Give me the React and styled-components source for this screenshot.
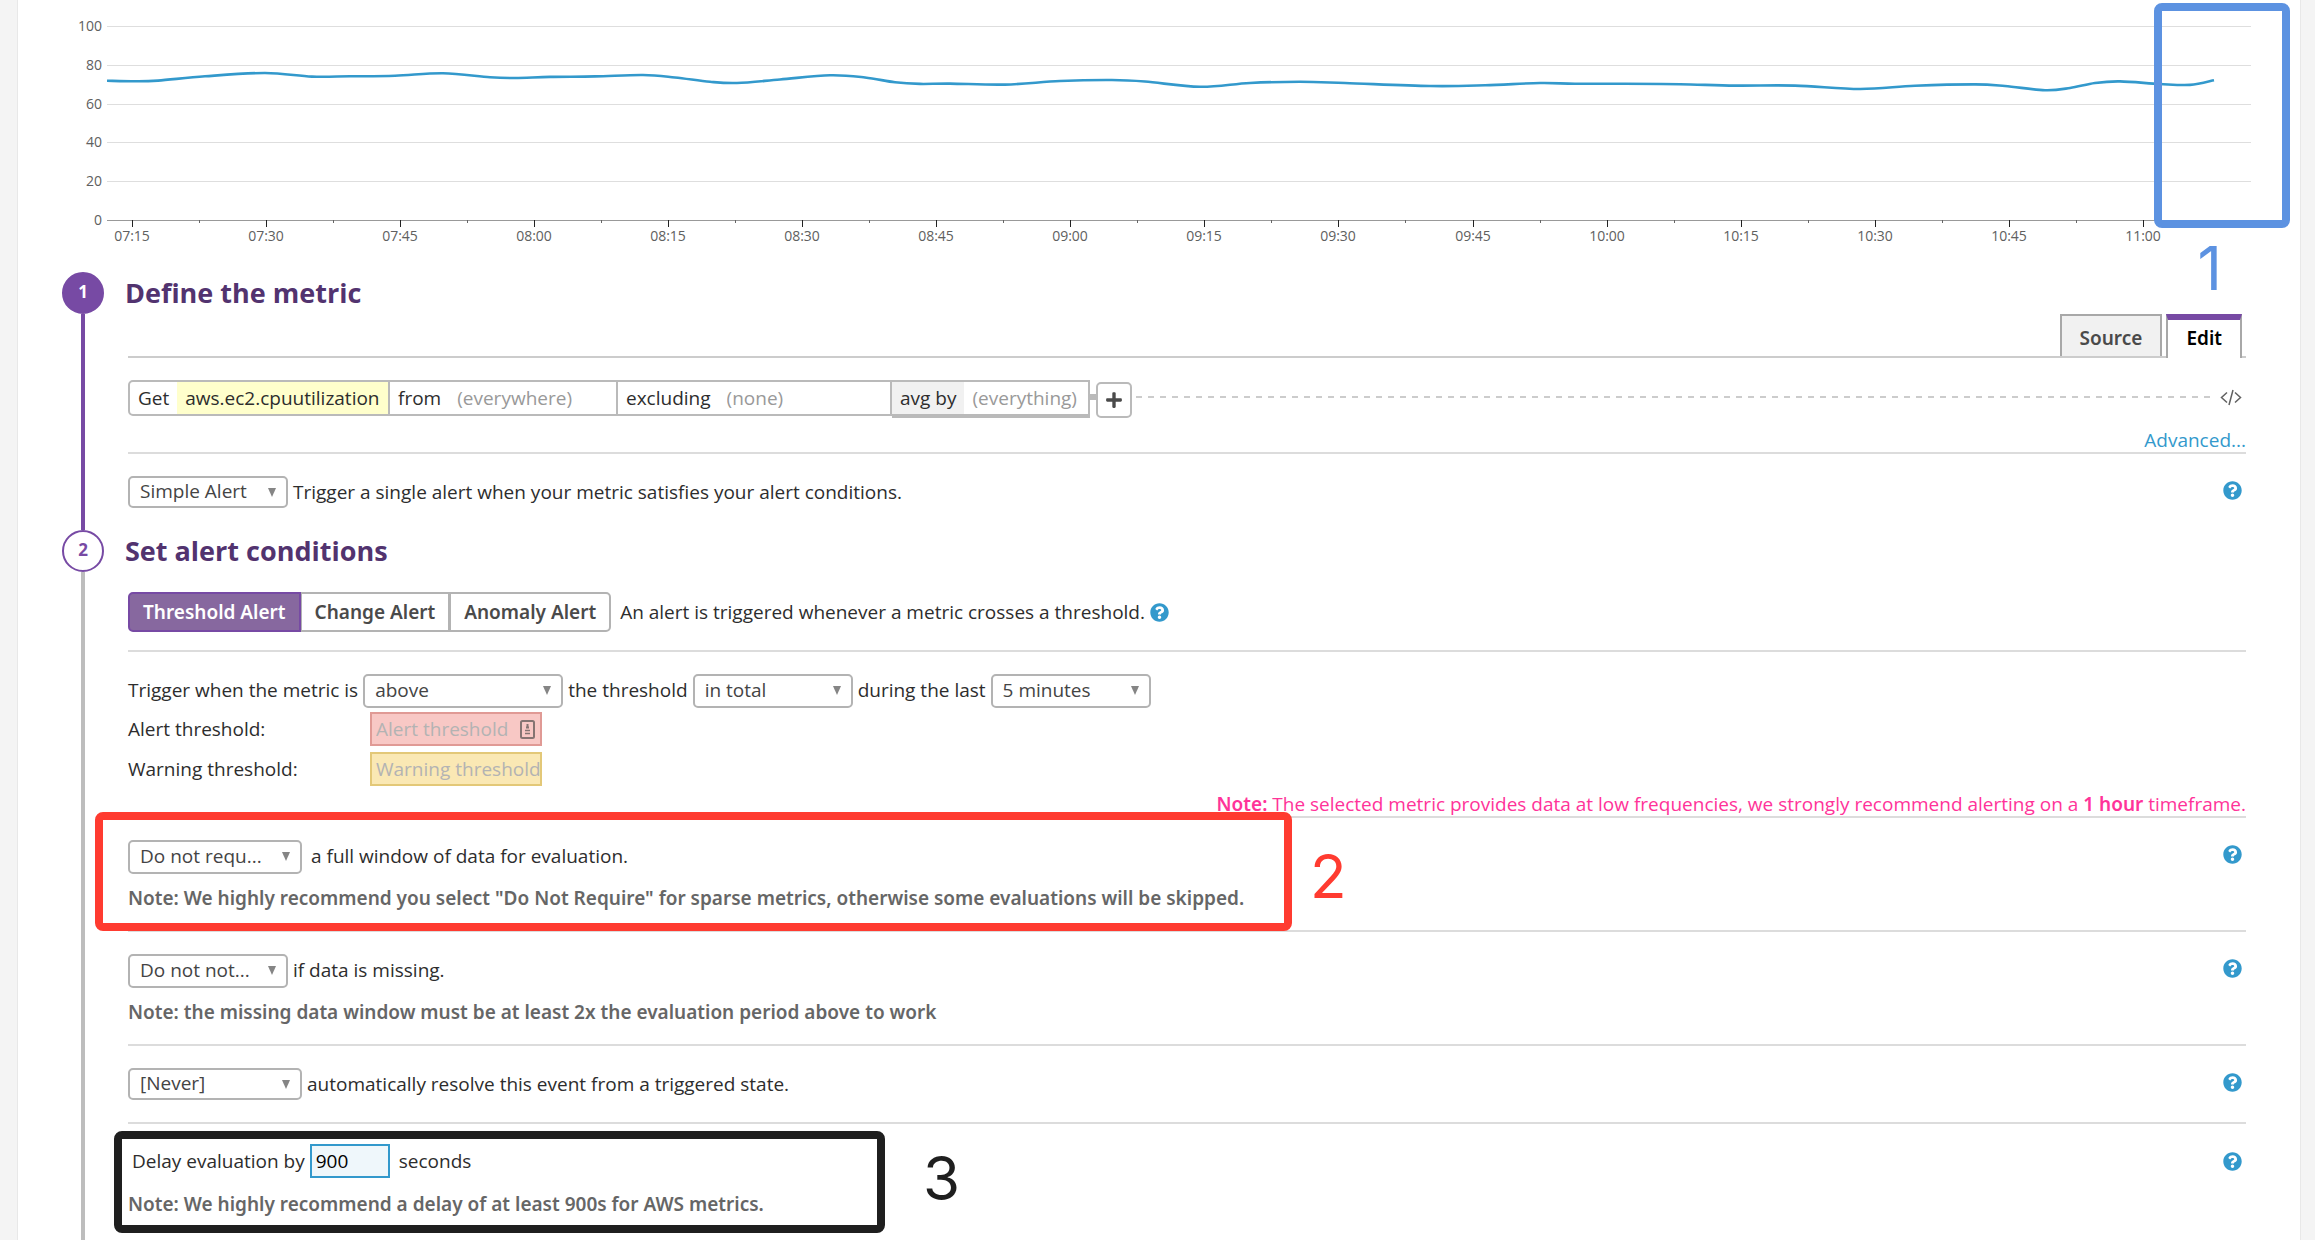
import React, { useState } from "react";
import styled, { createGlobalStyle, css } from "styled-components";
import { FaPlus, FaQuestionCircle } from "react-icons/fa";

const color = {
  purple: "#774aa4",
  heading: "#52336f",
  text: "#2d2d2d",
  muted: "#666666",
  faint: "#999999",
  border: "#b3b3b3",
  rule: "#dcdcdc",
  blue: "#3399cc",
  pink: "#ff3399",
};

const sans = '"Open Sans", "Noto Sans", sans-serif';
const strong = css`
  font-family: "Noto Sans", "Open Sans", sans-serif;
  font-weight: 600;
`;

const GlobalStyle = createGlobalStyle`
  *, *::before, *::after { box-sizing: border-box; }
  body {
    margin: 0;
    background: #fff;
    color: ${color.text};
    font-family: ${sans};
    font-size: 19px;
    line-height: 24px;
  }
  button, input, select { font: inherit; color: inherit; margin: 0; }
`;

const Backdrop = styled.div`
  margin-bottom: 16px;
  padding: 0 15px 0 18px;
  background: #f4f4f4;
`;

const Panel = styled.main`
  background: #fff;
  box-shadow: 0 0 0 1px #e8e8e8;
  clip-path: inset(0 -1px);
`;

const ChartArea = styled.section`
  position: relative;
  padding-bottom: 12px;
`;

const ChartSvg = styled.svg`
  display: block;
  width: 100%;
  height: auto;
  font-size: 14px;
  fill: #606060;
`;

const Callout = styled.div`
  position: absolute;
  border: 8px solid ${(p) => p.$color};
  border-radius: 8px;
  pointer-events: none;
  ${(p) => p.$place}
`;

const CalloutNumber = styled.span`
  position: absolute;
  color: ${(p) => p.$color};
  font-family: Inter, "Liberation Sans", sans-serif;
  font-size: 60px;
  line-height: 64px;
  ${(p) => p.$place}
`;

const Step = styled.section`
  display: grid;
  grid-template-columns: 42px minmax(0, 1fr);
  column-gap: 24px;
  padding: 0 54px 0 44px;
`;

const Rail = styled.div`
  display: flex;
  flex-direction: column;
  align-items: center;
  &::after {
    content: "";
    flex: 1;
    width: 4px;
    background: ${(p) => (p.$done ? color.purple : "#bdbdbd")};
  }
`;

const StepNumber = styled.span`
  width: 42px;
  height: 42px;
  border: 2px solid ${color.purple};
  border-radius: 50%;
  background: ${(p) => (p.$done ? color.purple : "#fff")};
  color: ${(p) => (p.$done ? "#fff" : color.purple)};
  font-size: 17px;
  font-weight: 700;
  line-height: 36px;
  text-align: center;
`;

const StepTitle = styled.h2`
  margin: 0 0 0 -3px;
  color: ${color.heading};
  font-size: 27px;
  font-weight: 700;
  line-height: 42px;
`;

const Tabs = styled.div`
  display: flex;
  justify-content: flex-end;
  gap: 4px;
  height: 44px;
  padding-right: 4px;
  border-bottom: 2px solid #cccccc;
`;

const Tab = styled.button`
  height: ${(p) => (p.$active ? 44 : 42)}px;
  padding: ${(p) => (p.$active ? "0 18px 2px" : "3px 18px 0")};
  border: 2px solid #a8a8a8;
  border-bottom: 0;
  border-top: ${(p) => (p.$active ? `6px solid ${color.purple}` : "2px solid #a8a8a8")};
  border-radius: 0;
  background: ${(p) => (p.$active ? "#fff" : "#f1f1f1")};
  color: ${(p) => (p.$active ? "#000" : "#4a4a4a")};
  ${strong}
`;

const Block = styled.div`
  position: relative;
  padding: ${(p) => p.$top ?? 22}px 0 ${(p) => p.$bottom ?? 0}px;
  border-bottom: ${(p) => (p.$last ? "0" : `2px solid ${color.rule}`)};
`;

const Query = styled.div`
  display: flex;
  align-items: flex-start;
  height: 38px;
`;

const Segment = styled.label`
  display: flex;
  align-items: stretch;
  width: ${(p) => p.$width}px;
  height: 36px;
  border: 2px solid #bababa;
  border-left-width: ${(p) => (p.$first ? 2 : 0)}px;
  border-radius: ${(p) => (p.$first ? "5px 0 0 5px" : "0")};
  box-shadow: ${(p) => (p.$raised ? "0 2px 0 #bababa" : "none")};
  line-height: 32px;
`;

const SegmentName = styled.span`
  padding: 0 8px;
  background: ${(p) => (p.$shaded ? "#f1f1f1" : "transparent")};
  white-space: nowrap;
`;

const SegmentInput = styled.input`
  flex: 1;
  min-width: 0;
  padding: 0 8px;
  border: 0;
  background: ${(p) => (p.$metric ? "#ffffcc" : "transparent")};
  &::placeholder { color: ${color.faint}; opacity: 1; }
`;

const Connector = styled.span`
  width: 6px;
  height: 6px;
  margin-top: 14px;
  background: #bababa;
`;

const AddButton = styled.button`
  display: grid;
  place-items: center;
  width: 36px;
  height: 36px;
  margin-top: 2px;
  padding: 0;
  border: 2px solid #bababa;
  border-radius: 5px;
  background: #fff;
  color: #4a4a4a;
`;

const Dashes = styled.span`
  flex: 1;
  height: 2px;
  margin: 16px 10px 0 4px;
  background: repeating-linear-gradient(90deg, #cccccc 0 6px, transparent 6px 12px);
`;

const CodeButton = styled.button`
  display: flex;
  margin: 9px 4px 0 0;
  padding: 0;
  border: 0;
  background: none;
`;

const AdvancedLine = styled.div`
  margin-top: 10px;
  text-align: right;
  a { color: ${color.blue}; text-decoration: none; }
`;

const Row = styled.div`
  display: flex;
  align-items: ${(p) => (p.$center ? "center" : "flex-start")};
  gap: 5px;
  margin-top: ${(p) => p.$gap ?? 0}px;
  padding-left: ${(p) => p.$indent ?? 0}px;
`;

const Words = styled.span`
  line-height: 32px;
  white-space: nowrap;
  padding-left: ${(p) => p.$pad ?? 0}px;
`;

const FieldLabel = styled.label`
  width: ${(p) => (p.$wide ? "237px" : "auto")};
  line-height: 32px;
  white-space: nowrap;
`;

const SelectBox = styled.span`
  position: relative;
  display: block;
  flex: none;
  width: ${(p) => p.$width}px;
  height: ${(p) => (p.$short ? 32 : 34)}px;
  &::after {
    content: "";
    position: absolute;
    right: 12px;
    top: 12px;
    border: 4px solid transparent;
    border-top: 9px solid #858585;
    border-bottom: 0;
    pointer-events: none;
  }
`;

const NativeSelect = styled.select`
  appearance: none;
  width: 100%;
  height: 100%;
  padding: 0 24px 2px 10px;
  border: 2px solid ${color.border};
  border-radius: 5px;
  background: #fff;
  color: #444;
`;

const HelpButton = styled.button`
  display: flex;
  flex: none;
  align-self: ${(p) => (p.$center ? "center" : "flex-start")};
  margin: ${(p) => (p.$center ? "0" : "5px")} 4px 0 ${(p) => (p.$inline ? "0" : "auto")};
  padding: 0;
  border: 0;
  background: none;
  color: ${color.blue};
`;

const AlertTypes = styled.div`
  display: flex;
  margin-right: 4px;
`;

const AlertType = styled.button`
  height: 40px;
  padding: 0 13px;
  border: 2px solid ${(p) => (p.$active ? color.purple : color.border)};
  background: ${(p) => (p.$active ? "#87689f" : "#fff")};
  color: ${(p) => (p.$active ? "#fff" : "#4a4a4a")};
  ${strong}
  &:first-child { border-radius: 5px 0 0 5px; }
  &:last-child { border-radius: 0 5px 5px 0; }
  & + & { border-left-width: 1px; }
`;

const tones = {
  alert: css`border-color: #e09a95; background: #f8c8c5;`,
  warning: css`border-color: #e3c878; background: #fae8b4;`,
  focus: css`border-color: ${color.blue}; background: #eff7fb; color: #000;`,
};

const TextField = styled.input`
  width: ${(p) => p.$width}px;
  height: 34px;
  padding: 0 0 0 4px;
  border: 2px solid;
  border-radius: 0;
  ${(p) => tones[p.$tone]}
  &::placeholder { color: #b3b3b3; opacity: 1; }
`;

const FieldWrap = styled.span`
  position: relative;
  display: flex;
  svg { position: absolute; right: 7px; top: 8px; }
`;

const Note = styled.p`
  margin: ${(p) => p.$gap ?? 12}px 0 0;
  color: ${color.muted};
  ${strong}
`;

const Frequency = styled.p`
  margin: 6px 0 0;
  color: ${color.pink};
  text-align: right;
  b { ${strong} }
`;

/* Samples of the CPU series, in the chart's own coordinates. */
const series = [
  [107, 80.7], [135, 81.3], [158, 80.6], [205, 76.3], [265, 73], [312, 76.6], [350, 76.3],
  [395, 75.8], [443, 73.2], [490, 77.2], [515, 78], [550, 76.9], [595, 76.4], [643, 75], [675, 77.5],
  [710, 81.8], [737, 83], [780, 79.5], [830, 75.3], [865, 77.5], [895, 82.3], [920, 83.9], [950, 83.6], [1005, 84.6],
  [1060, 81], [1112, 80], [1145, 81.5], [1200, 86.8], [1250, 83], [1300, 81.8], [1345, 83], [1430, 86],
  [1485, 85.3], [1540, 83], [1575, 83.8], [1625, 83.8], [1680, 84.2], [1735, 85.6], [1795, 85.6],
  [1860, 89], [1915, 85.8], [1975, 84.4], [2005, 86], [2045, 90.2], [2070, 88], [2095, 83], [2120, 81.4], [2160, 84],
  [2190, 84.9], [2214, 80.3],
];

const smoothPath = (pts) =>
  pts.slice(1).reduce((d, p, i) => {
    const p0 = pts[Math.max(i - 1, 0)];
    const p1 = pts[i];
    const p3 = pts[Math.min(i + 2, pts.length - 1)];
    return `${d} C${p1[0] + (p[0] - p0[0]) / 6},${p1[1] + (p[1] - p0[1]) / 6} ${
      p[0] - (p3[0] - p1[0]) / 6
    },${p[1] - (p3[1] - p1[1]) / 6} ${p[0]},${p[1]}`;
  }, `M${pts[0][0]},${pts[0][1]}`);

const gridLines = [[100, 26], [80, 65], [60, 104], [40, 142], [20, 181]];
const times = [
  "07:15", "07:30", "07:45", "08:00", "08:15", "08:30", "08:45", "09:00",
  "09:15", "09:30", "09:45", "10:00", "10:15", "10:30", "10:45", "11:00",
];

function Chart() {
  return (
    <ChartSvg viewBox="18 0 2282 260" role="img" aria-label="CPU utilization">
      {gridLines.map(([value, y]) => (
        <g key={value}>
          <rect x="107" y={y} width="2144" height="1" fill="#dedede" />
          <text x="102" y={y + 5} textAnchor="end">{value}</text>
        </g>
      ))}
      <text x="102" y="225" textAnchor="end">0</text>
      <rect x="107" y="220" width="2144" height="1" fill="#999" />
      {times.map((time, i) => {
        const x = Math.round(132 + i * 134.05);
        return (
          <g key={time}>
            <rect x={x} y="220" width="1" height="7" fill="#222" />
            {i < times.length - 1 && <rect x={x + 67} y="220" width="1" height="3" fill="#666" />}
            <text x={x} y="241" textAnchor="middle">{time}</text>
          </g>
        );
      })}
      <path d={smoothPath(series)} fill="none" stroke={color.blue} strokeWidth="2.6" />
    </ChartSvg>
  );
}

function Select({ label, width, short, options }) {
  return (
    <SelectBox $width={width} $short={short}>
      <NativeSelect aria-label={label}>
        {options.map((o) => <option key={o}>{o}</option>)}
      </NativeSelect>
    </SelectBox>
  );
}

function Help({ inline, center }) {
  return (
    <HelpButton type="button" aria-label="Help" $inline={inline} $center={center}>
      <FaQuestionCircle size={19} />
    </HelpButton>
  );
}

const BLUE = "#5c92e1";
const RED = "#ff3b30";
const BLACK = "#1f1f1f";

export default function App() {
  const [type, setType] = useState("Threshold Alert");
  const [tab, setTab] = useState("Edit");
  return (
    <>
      <GlobalStyle />
      <Backdrop>
        <Panel>
          <ChartArea>
            <Chart />
            <Callout $color={BLUE} $place={{ top: 3, right: 10, width: 136, height: 225 }} />
            <CalloutNumber $color={BLUE} $place={{ top: 236, right: 78 }}>1</CalloutNumber>
          </ChartArea>

          <Step>
            <Rail $done><StepNumber $done>1</StepNumber></Rail>
            <div>
              <StepTitle>Define the metric</StepTitle>
              <Tabs>
                {["Source", "Edit"].map((t) => (
                  <Tab key={t} type="button" $active={t === tab} onClick={() => setTab(t)}>{t}</Tab>
                ))}
              </Tabs>
              <Block>
                <Query>
                  <Segment $width={262} $first>
                    <SegmentName>Get</SegmentName>
                    <SegmentInput $metric defaultValue="aws.ec2.cpuutilization" />
                  </Segment>
                  <Segment $width={228}>
                    <SegmentName>from</SegmentName>
                    <SegmentInput placeholder="(everywhere)" />
                  </Segment>
                  <Segment $width={274}>
                    <SegmentName>excluding</SegmentName>
                    <SegmentInput placeholder="(none)" />
                  </Segment>
                  <Segment $width={198} $raised>
                    <SegmentName $shaded>avg by</SegmentName>
                    <SegmentInput placeholder="(everything)" />
                  </Segment>
                  <Connector />
                  <AddButton type="button" aria-label="Add"><FaPlus size={18} /></AddButton>
                  <Dashes />
                  <CodeButton type="button" aria-label="Show code">
                    <svg width="22" height="17" viewBox="0 0 22 17" fill="none" stroke="#606060" strokeWidth="1.5">
                      <path d="M7 3.5 L1.5 8.5 L7 13.5 M15 3.5 L20.5 8.5 L15 13.5 M13 1 L9 16" />
                    </svg>
                  </CodeButton>
                </Query>
                <AdvancedLine><a href="#advanced">Advanced...</a></AdvancedLine>
              </Block>
              <Block $bottom={22} $last>
                <Row>
                  <Select label="Alert grouping" width={160} short options={["Simple Alert", "Multi Alert"]} />
                  <Words>Trigger a single alert when your metric satisfies your alert conditions.</Words>
                  <Help />
                </Row>
              </Block>
            </div>
          </Step>

          <Step>
            <Rail><StepNumber>2</StepNumber></Rail>
            <div>
              <StepTitle>Set alert conditions</StepTitle>
              <Block $top={20} $bottom={18}>
                <Row $center>
                  <AlertTypes>
                    {["Threshold Alert", "Change Alert", "Anomaly Alert"].map((t) => (
                      <AlertType key={t} type="button" $active={t === type} onClick={() => setType(t)}>{t}</AlertType>
                    ))}
                  </AlertTypes>
                  <Words>An alert is triggered whenever a metric crosses a threshold.</Words>
                  <Help inline center />
                </Row>
              </Block>

              <Block>
                <Row>
                  <Words>Trigger when the metric is</Words>
                  <Select label="Comparison" width={200} options={["above", "below"]} />
                  <Words>the threshold</Words>
                  <Select label="Aggregation" width={160} options={["in total", "on average"]} />
                  <Words>during the last</Words>
                  <Select label="Window" width={160} options={["5 minutes", "1 hour"]} />
                </Row>
                <Row $center $gap={4}>
                  <FieldLabel $wide htmlFor="alert-threshold">Alert threshold:</FieldLabel>
                  <FieldWrap>
                    <TextField id="alert-threshold" $tone="alert" $width={172} placeholder="Alert threshold" />
                    <svg width="15" height="19" viewBox="0 0 15 19" fill="none" stroke="#857472" strokeWidth="2">
                      <rect x="1" y="1" width="13" height="17" rx="1.5" />
                      <path d="M5 13.5h5M5 10.5h5" strokeWidth="1.5" />
                      <path d="M7.5 4v4M6 7.5h3" />
                    </svg>
                  </FieldWrap>
                </Row>
                <Row $center $gap={6}>
                  <FieldLabel $wide htmlFor="warning-threshold">Warning threshold:</FieldLabel>
                  <TextField id="warning-threshold" $tone="warning" $width={172} placeholder="Warning threshold" />
                </Row>
                <Frequency>
                  <b>Note:</b> The selected metric provides data at low frequencies, we strongly recommend alerting on a <b>1 hour</b> timeframe.
                </Frequency>
              </Block>

              <Block $bottom={20}>
                <Row>
                  <Select label="Data window" width={174} options={["Do not requ...", "Require"]} />
                  <Words $pad={4}>a full window of data for evaluation.</Words>
                  <Help />
                </Row>
                <Note>
                  Note: We highly recommend you select "Do Not Require" for sparse metrics, otherwise some evaluations will be skipped.
                </Note>
                <Callout $color={RED} $place={{ top: -6, left: -33, width: 1197, height: 119 }} />
                <CalloutNumber $color={RED} $place={{ top: 26, left: 1182 }}>2</CalloutNumber>
              </Block>

              <Block $bottom={20}>
                <Row>
                  <Select label="Missing data" width={160} options={["Do not not...", "Notify"]} />
                  <Words>if data is missing.</Words>
                  <Help />
                </Row>
                <Note>Note: the missing data window must be at least 2x the evaluation period above to work</Note>
              </Block>

              <Block $bottom={22}>
                <Row>
                  <Select label="Auto resolve" width={174} short options={["[Never]", "1 hour"]} />
                  <Words>automatically resolve this event from a triggered state.</Words>
                  <Help />
                </Row>
              </Block>

              <Block $top={20} $bottom={24} $last>
                <Row $center $indent={4}>
                  <FieldLabel htmlFor="delay">Delay evaluation by</FieldLabel>
                  <TextField id="delay" $tone="focus" $width={80} defaultValue="900" />
                  <Words $pad={4}>seconds</Words>
                  <Help center />
                </Row>
                <Note $gap={14}>Note: We highly recommend a delay of at least 900s for AWS metrics.</Note>
                <Callout $color={BLACK} $place={{ top: 7, left: -14, width: 771, height: 102 }} />
                <CalloutNumber $color={BLACK} $place={{ top: 22, left: 795 }}>3</CalloutNumber>
              </Block>
            </div>
          </Step>
        </Panel>
      </Backdrop>
    </>
  );
}
